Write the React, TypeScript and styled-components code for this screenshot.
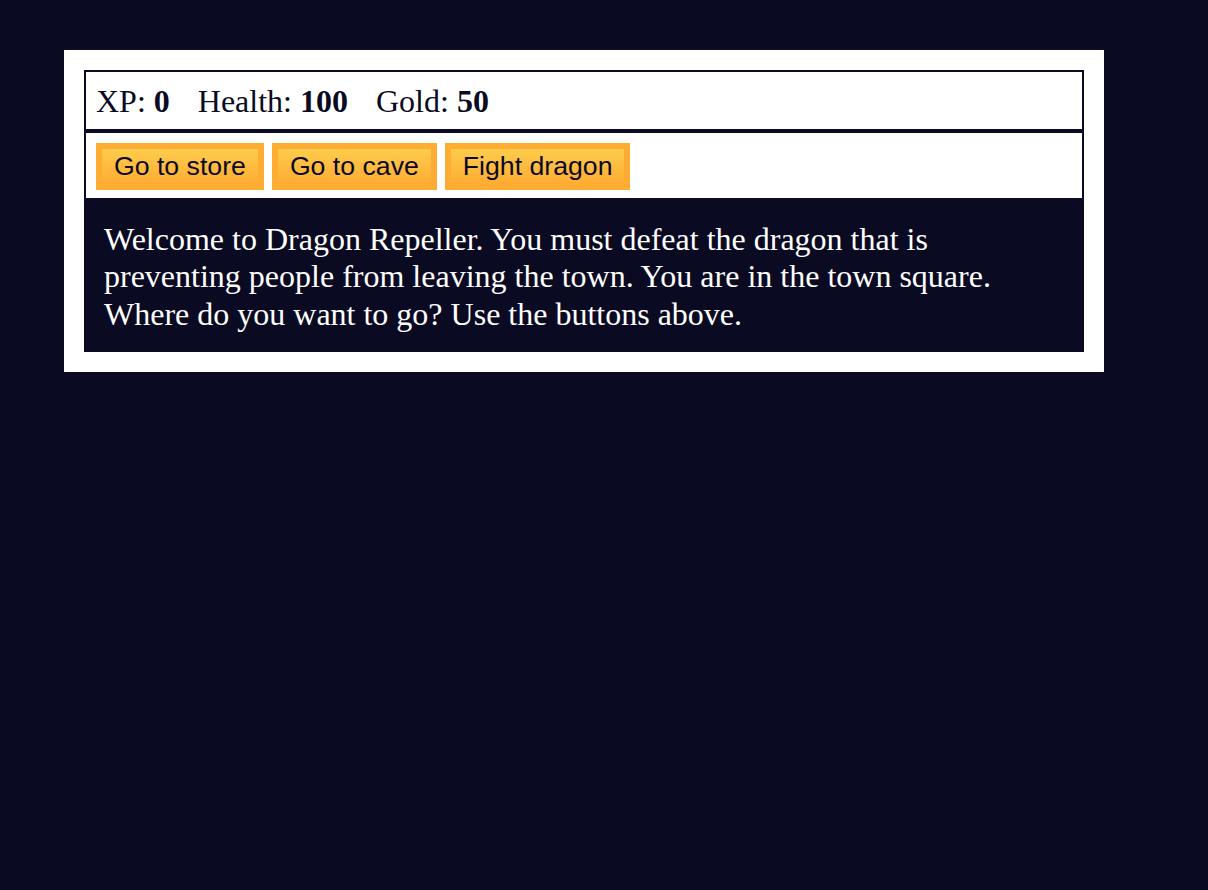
import React from "react";
import styled, { createGlobalStyle } from "styled-components";

const GlobalStyle = createGlobalStyle`
  html, body {
    margin: 0;
    padding: 0;
    background-color: #0a0a23;
  }
  body {
    font-family: "Liberation Serif", "Times New Roman", serif;
  }
`;

const Game = styled.div`
  box-sizing: border-box;
  width: 1040px;
  margin: 50px 0 0 64px;
  padding: 20px;
  background-color: #ffffff;
  color: #ffffff;
`;

const Stats = styled.div`
  border: 2px solid #0a0a23;
  padding: 11px 10px 9px;
  color: #0a0a23;
  font-size: 32px;
  line-height: 37px;
  white-space: pre;
`;

const Stat = styled.span`
  padding-right: 20px;
`;

const Controls = styled.div`
  border: 2px solid #0a0a23;
  padding: 10px 10px 8px;
  height: 47px;
  display: flex;
  gap: 8px;
  align-items: flex-start;
`;

const Button = styled.button`
  box-sizing: border-box;
  height: 47px;
  padding: 0 12px 1px;
  margin: 0;
  cursor: pointer;
  color: #0a0a23;
  background-color: #feac32;
  background-image: linear-gradient(#fecc4c, #ffac33);
  border: 6px solid #feac32;
  font-family: "Liberation Sans", Arial, sans-serif;
  font-size: 26.67px;
  line-height: 30px;
`;

const Text = styled.div`
  background-color: #0a0a23;
  color: #ffffff;
  padding: 21px 20px 19px;
  font-size: 32px;
  line-height: 37.33px;
`;

export default function App() {
  return (
    <>
      <GlobalStyle />
      <Game>
        <Stats>
          <Stat>
            XP: <strong>0</strong>
          </Stat>{" "}
          <Stat>
            Health: <strong>100</strong>
          </Stat>{" "}
          <Stat>
            Gold: <strong>50</strong>
          </Stat>
        </Stats>
        <Controls>
          <Button>Go to store</Button>
          <Button>Go to cave</Button>
          <Button>Fight dragon</Button>
        </Controls>
        <Text>
          Welcome to Dragon Repeller. You must defeat the dragon that is
          preventing people from leaving the town. You are in the town square.
          Where do you want to go? Use the buttons above.
        </Text>
      </Game>
    </>
  );
}
